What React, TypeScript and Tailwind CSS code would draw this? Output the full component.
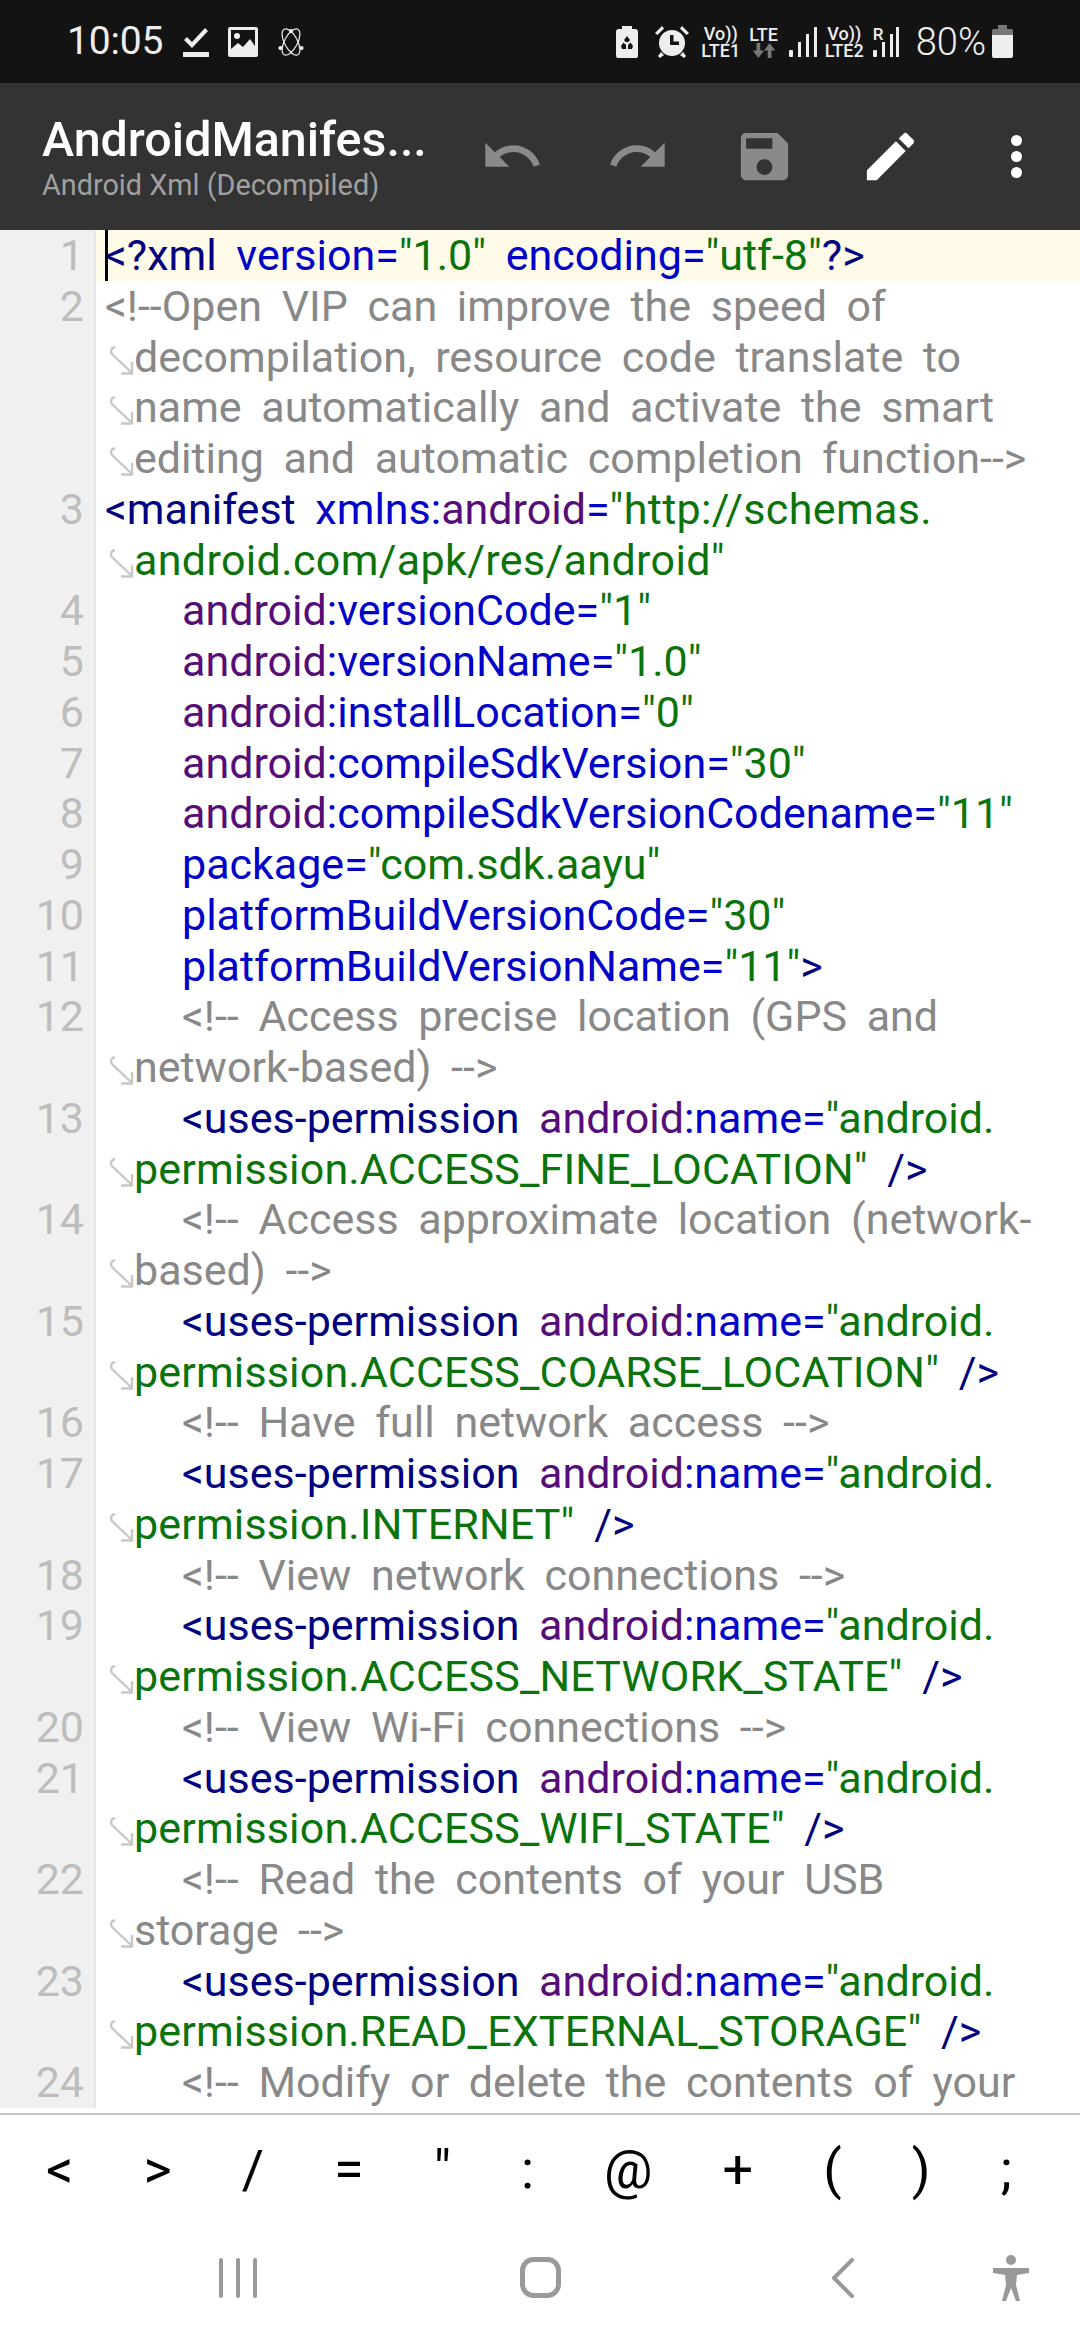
import type { ReactNode } from 'react'

const ROW = 'h-[50.76px]'

// t = tag, a = attribute, n = namespace, s = string, u = url string, p = permission string, c = comment
type Token = [keyof typeof COLORS, string]

const COLORS = {
  t: 'text-[#000080]',
  a: 'text-[#0000c8]',
  n: 'text-[#560d78]',
  s: 'text-[#0a740a]',
  u: 'text-[#0a740a] tracking-[0.35px]',
  p: 'text-[#0a740a] tracking-[0.15px]',
  c: 'text-[#888888]',
}

type Line = { num?: number; wrap?: boolean; indent?: boolean; tokens: Token[] }

const perm = (num: number, name: string): Line[] => [
  {
    num,
    indent: true,
    tokens: [['t', '<uses-permission '], ['n', 'android'], ['a', ':name='], ['s', '"android.']],
  },
  {
    wrap: true,
    tokens: [['p', `permission.${name}"`], ['t', ' />']],
  },
]

const attr = (num: number, ns: boolean, name: string, value: string, close = ''): Line => ({
  num,
  indent: true,
  tokens: [
    ...(ns ? ([['n', 'android'], ['a', ':']] as Token[]) : []),
    ['a', `${name}=`],
    ['s', `"${value}"`],
    ['t', close],
  ],
})

const LINES: Line[] = [
  {
    num: 1,
    tokens: [['t', '<?xml '], ['a', 'version='], ['s', '"1.0" '], ['a', 'encoding='], ['s', '"utf-8"'], ['t', '?>']],
  },
  { num: 2, tokens: [['c', '<!--Open VIP can improve the speed of']] },
  { wrap: true, tokens: [['c', 'decompilation, resource code translate to']] },
  { wrap: true, tokens: [['c', 'name automatically and activate the smart']] },
  { wrap: true, tokens: [['c', 'editing and automatic completion function-->']] },
  {
    num: 3,
    tokens: [['t', '<manifest '], ['a', 'xmlns:'], ['n', 'android'], ['a', '='], ['u', '"http://schemas.']],
  },
  { wrap: true, tokens: [['u', 'android.com/apk/res/android"']] },
  attr(4, true, 'versionCode', '1'),
  attr(5, true, 'versionName', '1.0'),
  attr(6, true, 'installLocation', '0'),
  attr(7, true, 'compileSdkVersion', '30'),
  attr(8, true, 'compileSdkVersionCodename', '11'),
  attr(9, false, 'package', 'com.sdk.aayu'),
  attr(10, false, 'platformBuildVersionCode', '30'),
  attr(11, false, 'platformBuildVersionName', '11', '>'),
  { num: 12, indent: true, tokens: [['c', '<!-- Access precise location (GPS and']] },
  { wrap: true, tokens: [['c', 'network-based) -->']] },
  ...perm(13, 'ACCESS_FINE_LOCATION'),
  { num: 14, indent: true, tokens: [['c', '<!-- Access approximate location (network-']] },
  { wrap: true, tokens: [['c', 'based) -->']] },
  ...perm(15, 'ACCESS_COARSE_LOCATION'),
  { num: 16, indent: true, tokens: [['c', '<!-- Have full network access -->']] },
  ...perm(17, 'INTERNET'),
  { num: 18, indent: true, tokens: [['c', '<!-- View network connections -->']] },
  ...perm(19, 'ACCESS_NETWORK_STATE'),
  { num: 20, indent: true, tokens: [['c', '<!-- View Wi-Fi connections -->']] },
  ...perm(21, 'ACCESS_WIFI_STATE'),
  { num: 22, indent: true, tokens: [['c', '<!-- Read the contents of your USB']] },
  { wrap: true, tokens: [['c', 'storage -->']] },
  ...perm(23, 'READ_EXTERNAL_STORAGE'),
  { num: 24, indent: true, tokens: [['c', '<!-- Modify or delete the contents of your']] },
]

const KEYS = ['<', '>', '/', '=', '"', ':', '@', '+', '(', ')', ';']

function WrapArrow() {
  return (
    <svg viewBox="0 0 26 30" className="w-[26px] h-[30px] shrink-0 ml-[3px] mt-[13px]" fill="none" stroke="#c8c8c8" strokeWidth="2.4">
      <path d="M7 2 C3 3 2 6 4 9 L24 28" />
      <path d="M24 17 V28.5 H13" />
    </svg>
  )
}

function Icon({ d, className }: { d: string; className: string }) {
  return (
    <svg viewBox="0 0 24 24" className={className} fill="currentColor">
      <path d={d} />
    </svg>
  )
}

function Signal({ className }: { className: string }) {
  return (
    <svg viewBox="0 0 28 30" className={className} fill="#eeeeee">
      <rect x="0" y="23" width="4" height="7" rx="1" />
      <rect x="9" y="15" width="3" height="15" />
      <rect x="17" y="7" width="3" height="23" />
      <rect x="25" y="0" width="3" height="30" />
    </svg>
  )
}

function SimBlock({ top, bottom, className }: { top: string; bottom: string; className: string }) {
  return (
    <div className={`flex flex-col items-center text-[18px] leading-[17px] font-medium ${className}`}>
      <span>{top}</span>
      <span>{bottom}</span>
    </div>
  )
}

function StatusBar() {
  return (
    <div className="h-[83px] shrink-0 bg-[#131313] flex items-center pl-[67px] pr-[67px] text-[#eeeeee]">
      <span className="text-[39px] leading-none tracking-[-0.2px]">10:05</span>
      <svg viewBox="0 0 26 30" className="w-[26px] h-[30px] ml-[20px]" fill="#eeeeee">
        <path d="M1 13 L4 10 L9 15 L22 1 L25 4 L9 21 Z" />
        <rect y="25" width="26" height="5" rx="0.5" />
      </svg>
      <svg viewBox="0 0 30 30" className="w-[30px] h-[30px] ml-[19px]">
        <rect width="30" height="30" rx="2" fill="#eeeeee" />
        <path d="M3 22 L10 16 L15 20 L22 12 L27 19 V3 H3 Z" fill="#131313" />
        <circle cx="9" cy="9" r="3" fill="#eeeeee" />
      </svg>
      <svg viewBox="0 0 28 30" className="w-[28px] h-[30px] ml-[19px]" fill="none" stroke="#eeeeee" strokeWidth="1.2">
        <ellipse cx="14" cy="15" rx="6.5" ry="14.5" transform="rotate(-28 14 15)" />
        <ellipse cx="14" cy="15" rx="6.5" ry="14.5" transform="rotate(28 14 15)" />
        <circle cx="14" cy="4" r="1.5" fill="#eeeeee" />
        <circle cx="3.5" cy="21" r="1.5" fill="#eeeeee" />
        <circle cx="24.5" cy="21" r="1.5" fill="#eeeeee" />
      </svg>

      <div className="ml-auto flex items-center">
        <svg viewBox="0 0 22 32" className="w-[22px] h-[32px]">
          <path d="M6 0 H16 V3 H19 Q22 3 22 6 V30 Q22 32 20 32 H2 Q0 32 0 30 V6 Q0 3 3 3 H6 Z" fill="#eeeeee" />
          <path d="M11 10 L14 14 L12.5 16 L9.5 16 L8 14 Z M5 20 L7.5 16.5 L10 19 V23 H6 Z M17 20 L14.5 16.5 L12 19 V23 H16 Z" fill="#131313" />
        </svg>
        <svg viewBox="0 0 34 32" className="w-[34px] h-[32px] ml-[17px]">
          <circle cx="17" cy="17" r="13" fill="#eeeeee" />
          <path d="M15 9 H18.5 V15.5 H24 V19 H15 Z" fill="#131313" />
          <path d="M0 7 L7 0 L9 2.5 L2.5 9 Z M34 7 L27 0 L25 2.5 L31.5 9 Z M6 26 L9 29 L5 32 L3 30 Z M28 26 L25 29 L29 32 L31 30 Z" fill="#eeeeee" />
        </svg>
        <SimBlock top="Vo))" bottom="LTE1" className="ml-[12px]" />
        <div className="ml-[9px] flex flex-col items-center text-[18px] leading-[17px] font-medium">
          <span>LTE</span>
          <svg viewBox="0 0 24 16" className="w-[24px] h-[15px]" fill="#777777">
            <path d="M4 0 H8 V8 H12 L6 16 L0 8 H4 Z" />
            <path d="M16 16 H20 V8 H24 L18 0 L12 8 H16 Z" />
          </svg>
        </div>
        <Signal className="w-[28px] h-[30px] ml-[11px]" />
        <SimBlock top="Vo))" bottom="LTE2" className="ml-[8px]" />
        <div className="ml-[9px] flex flex-col items-start w-[28px]">
          <span className="text-[17px] leading-[15px] font-medium h-[15px]">R</span>
          <svg viewBox="0 0 28 15" className="w-[28px] h-[15px]" fill="#eeeeee">
            <rect x="0" y="8" width="4" height="7" rx="1" />
            <rect x="9" y="0" width="3" height="15" />
          </svg>
          <svg viewBox="0 0 9 30" className="w-[9px] h-[30px] -mt-[30px] ml-[17px]" fill="#eeeeee">
            <rect x="0" y="7" width="3" height="23" />
            <rect x="6" y="0" width="3" height="30" />
          </svg>
        </div>
        <span className="ml-[15px] text-[38px] leading-none font-light">80%</span>
        <svg viewBox="0 0 21 33" className="w-[21px] h-[33px] ml-[6px]">
          <path d="M6 0 H15 V4 H19 Q21 4 21 6 V10 H0 V6 Q0 4 2 4 H6 Z" fill="#777777" />
          <path d="M0 10 H21 V31 Q21 33 19 33 H2 Q0 33 0 31 Z" fill="#eeeeee" />
        </svg>
      </div>
    </div>
  )
}

function ActionCell({ children }: { children: ReactNode }) {
  return <div className="w-[126px] shrink-0 flex items-center justify-center">{children}</div>
}

function AppBar() {
  return (
    <div className="h-[147px] shrink-0 bg-[#333333] flex items-center pb-[1px]">
      <div className="w-[449px] shrink-0 pl-[42px]">
        <div className="text-white text-[48.4px] leading-[54px] font-medium mt-[4px]">AndroidManifes...</div>
        <div className="text-[#a0a0a0] text-[28.8px] leading-[36px]">Android Xml (Decompiled)</div>
      </div>
      <ActionCell>
        <Icon d="M12.5 8c-2.65 0-5.05.99-6.9 2.6L2 7v9h9l-3.62-3.62c1.39-1.16 3.16-1.88 5.12-1.88 3.54 0 6.55 2.31 7.6 5.5l2.37-.78C21.08 11.03 17.15 8 12.5 8z" className="w-[64px] h-[64px] text-[#8a8a8a]" />
      </ActionCell>
      <ActionCell>
        <Icon d="M18.4 10.6C16.55 8.99 14.15 8 11.5 8c-4.65 0-8.58 3.03-9.96 7.22L3.9 16c1.05-3.19 4.05-5.5 7.6-5.5 1.95 0 3.73.72 5.12 1.88L13 16h9V7l-3.6 3.6z" className="w-[64px] h-[64px] text-[#8a8a8a]" />
      </ActionCell>
      <ActionCell>
        <Icon d="M17 3H5c-1.11 0-2 .9-2 2v14c0 1.1.89 2 2 2h14c1.1 0 2-.9 2-2V7l-4-4zm-5 16c-1.66 0-3-1.34-3-3s1.34-3 3-3 3 1.34 3 3-1.34 3-3 3zm3-10H5V5h10v4z" className="w-[63px] h-[63px] text-[#8a8a8a]" />
      </ActionCell>
      <ActionCell>
        <Icon d="M3 17.25V21h3.75L17.81 9.94l-3.75-3.75L3 17.25zM20.71 7.04c.39-.39.39-1.02 0-1.41l-2.34-2.34c-.39-.39-1.02-.39-1.41 0l-1.83 1.83 3.75 3.75 1.83-1.83z" className="w-[63px] h-[63px] text-white" />
      </ActionCell>
      <ActionCell>
        <div className="flex flex-col gap-[5px]">
          <span className="block w-[11px] h-[11px] rounded-full bg-white" />
          <span className="block w-[11px] h-[11px] rounded-full bg-white" />
          <span className="block w-[11px] h-[11px] rounded-full bg-white" />
        </div>
      </ActionCell>
    </div>
  )
}

function CodeRow({ line, first }: { line: Line; first: boolean }) {
  return (
    <div className={`${ROW} shrink-0 flex`}>
      <div className="w-[96px] shrink-0 bg-[#f0f0f0] border-r-2 border-[#e6e6e6] pr-[10px] text-right text-[#bdbdbd] text-[43px] leading-[50px]">
        {line.num}
      </div>
      <div
        className={`flex-1 min-w-0 flex whitespace-pre text-[43px] leading-[50px] [word-spacing:9px] ${
          first ? 'bg-[#fffbe8] relative' : ''
        } ${line.indent ? 'pl-[86px]' : 'pl-[9px]'}`}
      >
        {first && <span className="absolute left-[9px] top-0 bottom-0 w-[3px] bg-black" />}
        {line.wrap && <WrapArrow />}
        <span>
          {line.tokens.map(([kind, text], i) => (
            <span key={i} className={COLORS[kind]}>
              {text}
            </span>
          ))}
        </span>
      </div>
    </div>
  )
}

export default function App() {
  return (
    <div className="w-[1080px] h-[2340px] bg-white flex flex-col overflow-hidden font-['Roboto',sans-serif]">
      <StatusBar />
      <AppBar />

      <div className="flex-1 min-h-0 flex flex-col overflow-hidden">
        {LINES.map((line, i) => (
          <CodeRow key={i} line={line} first={i === 0} />
        ))}
      </div>

      {/* Symbol shortcut bar */}
      <div className="h-[112px] shrink-0 border-t-2 border-[#c4c4c4] flex items-center pl-[11px]">
        {KEYS.map(key => (
          <span key={key} className="px-[35px] text-black text-[54px] leading-none">
            {key}
          </span>
        ))}
      </div>

      {/* Navigation bar */}
      <div className="h-[115px] shrink-0 flex items-center pb-[10px] text-[#999999]">
        <svg viewBox="0 0 38 40" className="w-[38px] h-[40px] ml-[219px]" fill="none" stroke="currentColor" strokeWidth="4" strokeLinecap="round">
          <path d="M2 2 V38 M19 2 V38 M36 2 V38" />
        </svg>
        <svg viewBox="0 0 41 41" className="w-[41px] h-[41px] ml-[263px]" fill="none" stroke="currentColor" strokeWidth="5">
          <rect x="2.5" y="2.5" width="36" height="36" rx="11" />
        </svg>
        <svg viewBox="0 0 23 40" className="w-[23px] h-[40px] ml-[270px]" fill="none" stroke="currentColor" strokeWidth="4" strokeLinecap="round" strokeLinejoin="round">
          <path d="M21 2 L3 20 L21 38" />
        </svg>
        <svg viewBox="0 0 38 46" className="w-[38px] h-[46px] ml-[138px]" fill="currentColor">
          <circle cx="19" cy="5" r="5" />
          <path d="M1 13 H37 V18 L25 20 L24 30 L28 46 H24 L19 33 L14 46 H10 L14 30 L13 20 L1 18 Z" />
        </svg>
      </div>
    </div>
  )
}
